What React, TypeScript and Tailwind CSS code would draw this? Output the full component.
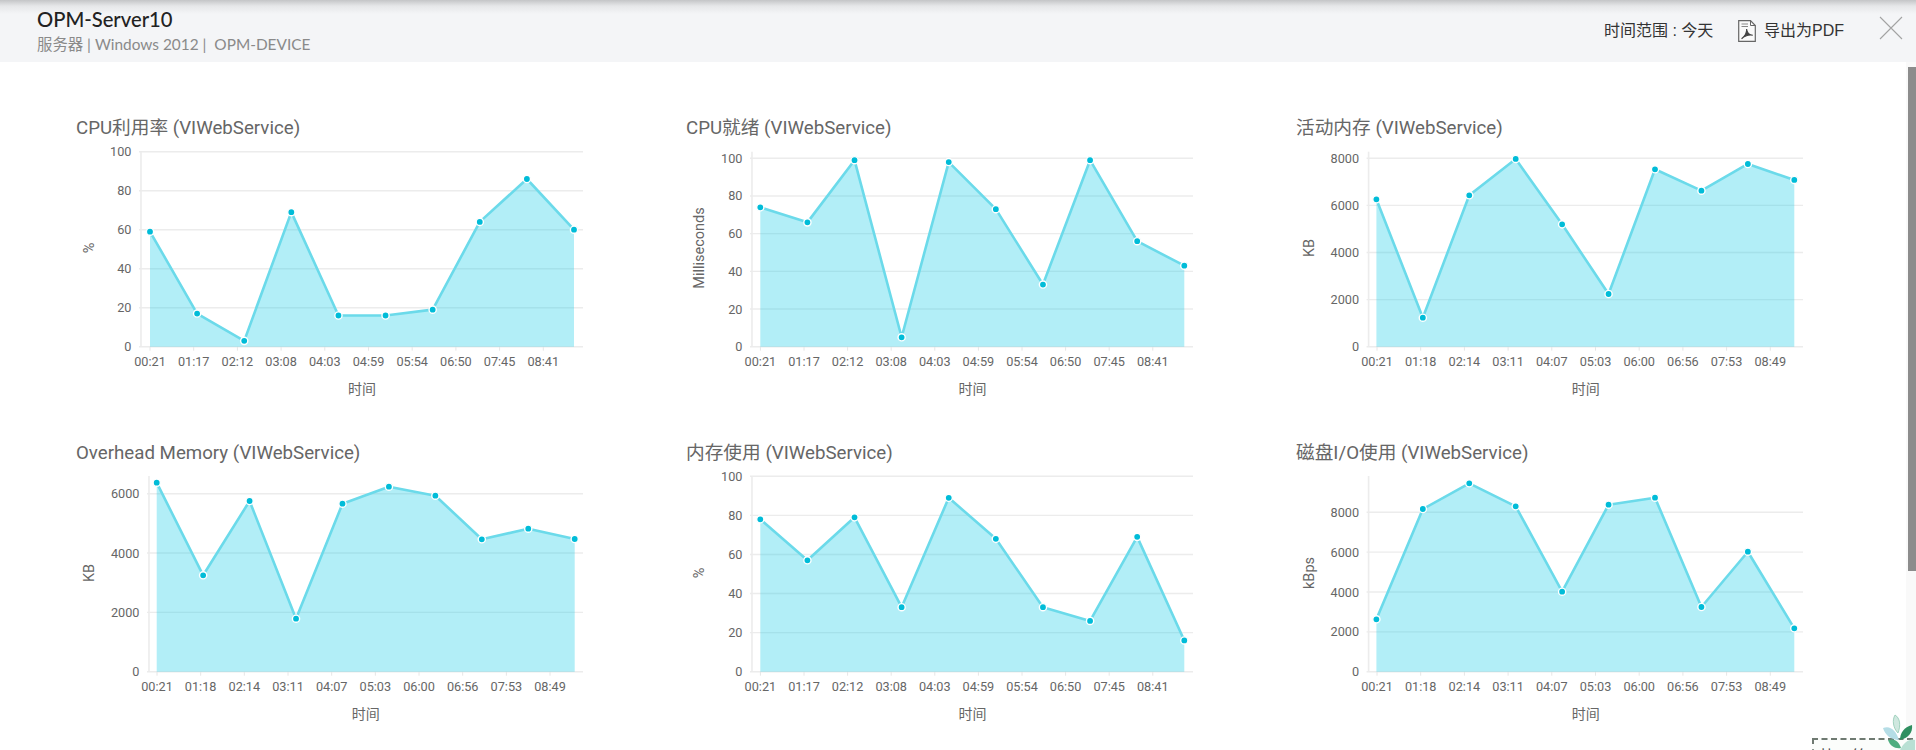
import React from "react";

type Tick = { label: string; y: number };
type ChartCfg = {
  title: string;
  unit: string;
  axisX: number;
  top: number;
  p0: number;
  pN: number;
  lx0: number;
  lstep: number;
  labels: string[];
  ticks: number[];
  maxTick: number;
  maxTickY: number;
  values: number[];
  yTitleY: number;
  xTitleX: number;
};

const LA = ["00:21", "01:17", "02:12", "03:08", "04:03", "04:59", "05:54", "06:50", "07:45", "08:41"];
const LB = ["00:21", "01:18", "02:14", "03:11", "04:07", "05:03", "06:00", "06:56", "07:53", "08:49"];
const BOTTOM = 206.7;
const RIGHT = 523;

const charts: ChartCfg[] = [
  { title: "CPU利用率 (VIWebService)", unit: "%", axisX: 81, top: 11.7, p0: 90, pN: 514, lx0: 90, lstep: 43.7, labels: LA, ticks: [0, 20, 40, 60, 80, 100], maxTick: 100, maxTickY: 11.7, values: [59, 17, 3, 69, 16, 16, 19, 64, 86, 60], yTitleY: 108, xTitleX: 302 },
  { title: "CPU就绪 (VIWebService)", unit: "Milliseconds", axisX: 82, top: 11.7, p0: 90.3, pN: 514.3, lx0: 90.4, lstep: 43.6, labels: LA, ticks: [0, 20, 40, 60, 80, 100], maxTick: 100, maxTickY: 18.3, values: [74, 66, 99, 5, 98, 73, 33, 99, 56, 43], yTitleY: 108, xTitleX: 302.5 },
  { title: "活动内存 (VIWebService)", unit: "KB", axisX: 88.6, top: 11.7, p0: 96.4, pN: 514.3, lx0: 97, lstep: 43.7, labels: LB, ticks: [0, 2000, 4000, 6000, 8000], maxTick: 8000, maxTickY: 18.3, values: [6258, 1232, 6428, 7972, 5196, 2237, 7533, 6627, 7759, 7080], yTitleY: 108, xTitleX: 305.7 },
  { title: "Overhead Memory (VIWebService)", unit: "KB", axisX: 89, top: 11, p0: 96.7, pN: 514.7, lx0: 97, lstep: 43.67, labels: LB, ticks: [0, 2000, 4000, 6000], maxTick: 6000, maxTickY: 28.7, values: [6372, 3249, 5754, 1787, 5663, 6236, 5933, 4463, 4820, 4473], yTitleY: 108, xTitleX: 305.7 },
  { title: "内存使用 (VIWebService)", unit: "%", axisX: 82, top: 11.3, p0: 90.3, pN: 514.3, lx0: 90.4, lstep: 43.6, labels: LA, ticks: [0, 20, 40, 60, 80, 100], maxTick: 100, maxTickY: 11.3, values: [78, 57, 79, 33, 89, 68, 33, 26, 69, 16], yTitleY: 108, xTitleX: 302.5 },
  { title: "磁盘I/O使用 (VIWebService)", unit: "kBps", axisX: 88.6, top: 11, p0: 96.4, pN: 514.3, lx0: 97, lstep: 43.7, labels: LB, ticks: [0, 2000, 4000, 6000, 8000], maxTick: 8000, maxTickY: 47.3, values: [2630, 8165, 9455, 8300, 4015, 8381, 8733, 3247, 6022, 2178], yTitleY: 108, xTitleX: 305.7 },
];

function Chart({ c }: { c: ChartCfg }) {
  const sy = (v: number) => BOTTOM - (v / c.maxTick) * (BOTTOM - c.maxTickY);
  const step = (c.pN - c.p0) / (c.values.length - 1);
  const pts = c.values.map((v, i) => [c.p0 + i * step, sy(v)] as const);
  const line = pts.map((p) => `${p[0]},${p[1]}`).join(" ");
  const area = `${c.p0},${BOTTOM} ${line} ${c.pN},${BOTTOM}`;
  const gridTicks: Tick[] = c.ticks.map((t) => ({ label: String(t), y: sy(t) }));
  return (
    <div className="h-[325px] w-[610px]">
      <h3 className="h-[26px] pl-4 pt-[1px] text-[18.7px] font-normal leading-[26px] text-[#666]">{c.title}</h3>
      <svg width="560" height="285" className="block fill-[#666] text-[12.7px]">
        {gridTicks.map((t) => (
          <g key={t.label}>
            <line x1={c.axisX - 2} x2={RIGHT} y1={t.y} y2={t.y} stroke="#ececec" strokeWidth="1.4" />
            <text x={c.axisX - 9.5} y={t.y} textAnchor="end" dominantBaseline="central">{t.label}</text>
          </g>
        ))}
        <line x1={c.axisX} x2={c.axisX} y1={c.top} y2={BOTTOM} stroke="#ececec" strokeWidth="1.6" />
        {c.labels.map((l, i) => {
          const x = c.lx0 + i * c.lstep;
          return (
            <g key={l}>
              <line x1={x} x2={x} y1={BOTTOM} y2={BOTTOM + 4} stroke="#e6e6e6" />
              <text x={x} y={221} textAnchor="middle" dominantBaseline="central">{l}</text>
            </g>
          );
        })}
        <polygon points={area} fill="#00c8e6" fillOpacity="0.3" />
        <polyline points={line} fill="none" stroke="#6bdaea" strokeWidth="2.6" strokeLinejoin="round" />
        {pts.map((p, i) => (
          <circle key={i} cx={p[0]} cy={p[1]} r="3.6" fill="#00bcd8" stroke="#ffffff" strokeWidth="1.4" />
        ))}
        <text x={c.xTitleX} y={249} textAnchor="middle" dominantBaseline="central" className="text-[14px]">时间</text>
        <text transform={`translate(29 ${c.yTitleY}) rotate(-90)`} textAnchor="middle" dominantBaseline="central" className="text-[14.5px]">{c.unit}</text>
      </svg>
    </div>
  );
}

function PdfIcon() {
  return (
    <svg width="18" height="22" viewBox="0 0 18 22" fill="none" className="shrink-0">
      <path d="M0.7 0.7H12.5L17.3 5.5V21.3H0.7Z" stroke="#666" strokeWidth="1.2" fill="#fafafa" />
      <path d="M12.5 0.7V5.5H17.3" stroke="#666" strokeWidth="1" />
      <path d="M3.5 4H10M3.5 6.5H10" stroke="#888" strokeWidth="1" />
      <path d="M8.6 9C9 12.5 6.5 16.5 3.6 18.8C6.5 16 11 14.5 14.8 15.2C11.5 15 9 12.5 8.6 9Z" stroke="#444" strokeWidth="1.1" fill="#444" />
    </svg>
  );
}

function Leaves() {
  return (
    <svg width="32" height="36" viewBox="0 0 32 36" className="absolute left-[1883px] top-[714px]">
      <path d="M12 1C17 4 18 11 15 19C10 14 9 6 12 1Z" fill="#cfe8df" stroke="#8fc9b3" strokeWidth="0.8" />
      <path d="M0 14C7 11 13 16 16 26C8 26 2 21 0 14Z" fill="#b5dde6" />
      <path d="M29 11C30 19 25 24 17 26C17 19 21 13 29 11Z" fill="#2f8f60" />
      <path d="M5 26C11 24 16 27 18 34C12 35 7 32 5 26Z" fill="#4fae80" />
      <path d="M32 26C27 24 21 28 17 36H32Z" fill="#b9e0d4" />
    </svg>
  );
}

export default function App() {
  return (
    <div className="relative flex h-[750px] w-[1916px] flex-col overflow-hidden bg-white [font-family:Roboto,'Noto_Sans_CJK_SC',sans-serif]">
      <header className="flex h-[62px] shrink-0 items-start justify-between bg-[#f4f5f7] bg-[linear-gradient(to_bottom,#c4c5c7_0px,#e6e7e9_6px,#f4f5f7_14px)]">
        <div className="pl-[37px] pt-[7px] [font-family:Lato,'Noto_Sans_CJK_SC',sans-serif]">
          <h1 className="text-[20.2px] font-medium leading-[24px] text-[#222]">OPM-Server10</h1>
          <p className="mt-[2px] text-[15.4px] leading-[22px] text-[#8a8a8a]">
            服务器 | Windows 2012 |&nbsp; OPM-DEVICE
          </p>
        </div>
        <div className="flex items-center pr-[13px] pt-[16px] text-[16px] leading-[30px] text-[#333] [font-family:'Liberation_Sans','Noto_Sans_CJK_SC',sans-serif]">
          <span className="w-[134px]">时间范围 : 今天</span>
          <PdfIcon />
          <span className="ml-[8px] w-[115px]">导出为PDF</span>
          <svg width="24" height="24" viewBox="0 0 24 24" className="-translate-y-[3px] stroke-[#a3a3a3]">
            <path d="M1 1L23 23M23 1L1 23" strokeWidth="1.1" fill="none" />
          </svg>
        </div>
      </header>
      <div className="flex min-h-0 flex-1">
        <main className="min-w-0 flex-1 overflow-hidden pl-[60px] pt-[52px]">
          <div className="grid w-[1830px] grid-cols-[repeat(3,610px)] text-[#666]">
            {charts.map((c) => (
              <Chart key={c.title} c={c} />
            ))}
          </div>
        </main>
        <div className="w-[10px] shrink-0 bg-[#f9f9f9] pl-[2px] pt-[5px]">
          <div className="h-[504px] w-[8px] bg-[#8c8c8c]" />
        </div>
      </div>
      <div className="absolute left-[1812px] top-[738px] h-[40px] w-[101px] border-2 border-dashed border-[#6f7a72] bg-[#fbfdfb] pl-[6px] pt-[6px] text-[16px] leading-[22px] tracking-[6px] text-[#444]">
        协 筋
      </div>
      <Leaves />
    </div>
  );
}
